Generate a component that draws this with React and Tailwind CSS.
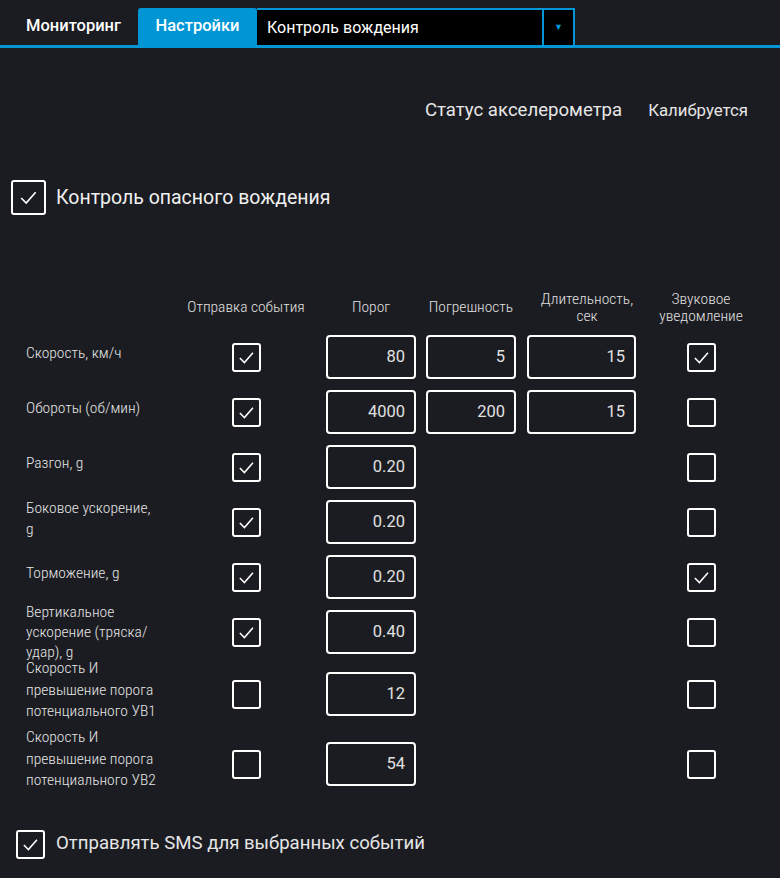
import React from 'react';

const ROWS = [
  { label: ['Скорость, км/ч'], send: true, porog: '80', err: '5', dur: '15', sound: true, h: 'h-[55px]', off: '-mt-[8px] leading-[21.5px]' },
  { label: ['Обороты (об/мин)'], send: true, porog: '4000', err: '200', dur: '15', sound: false, h: 'h-[55px]', off: '-mt-[8px] leading-[21.5px]' },
  { label: ['Разгон, g'], send: true, porog: '0.20', sound: false, h: 'h-[55px]', off: '-mt-[8px] leading-[21.5px]' },
  { label: ['Боковое ускорение,', 'g'], send: true, porog: '0.20', sound: false, h: 'h-[55px]', off: '-mt-[6px] leading-[21.5px]' },
  { label: ['Торможение, g'], send: true, porog: '0.20', sound: true, h: 'h-[55px]', off: '-mt-[8px] leading-[21.5px]' },
  { label: ['Вертикальное', 'ускорение (тряска/', 'удар), g'], send: true, porog: '0.40', sound: false, h: 'h-[55px]', off: '-mt-[1px] leading-[20px]' },
  { label: ['Скорость И', 'превышение порога', 'потенциального УВ1'], send: false, porog: '12', sound: false, h: 'h-[69px]', off: '-mt-[8px] leading-[21.5px]' },
  { label: ['Скорость И', 'превышение порога', 'потенциального УВ2'], send: false, porog: '54', sound: false, h: 'h-[71px]', off: '-mt-[10px] leading-[21.5px]' },
];

const narrow = { fontFamily: '"Roboto Condensed", "Liberation Sans Narrow", Roboto, sans-serif' };

function Check({ on, big }) {
  return (
    <div
      className={
        big
          ? 'w-[35px] h-[35px] border-2 border-white rounded-[3px] flex items-center justify-center'
          : 'w-[29px] h-[29px] border-2 border-white rounded-[3px] flex items-center justify-center'
      }
    >
      {on && (
        <svg width={big ? 21 : 19} height={big ? 21 : 19} viewBox="0 0 20 20" fill="none" stroke="white" strokeWidth="1.6">
          <path d="M3 10.5l4.8 4.8 9-10.3" />
        </svg>
      )}
    </div>
  );
}

function Field({ value, w }) {
  return (
    <div className={`${w} h-[44px] border-2 border-white rounded-[4px] flex items-center justify-end pr-[9px] text-[16.5px] text-[#e0e0e0]`}>
      {value}
    </div>
  );
}

export default function App() {
  return (
    <div className="w-[780px] h-[878px] bg-[#1b1c21] overflow-hidden" style={{ fontFamily: 'Roboto, "Liberation Sans", sans-serif' }}>
      {/* Tabs */}
      <div className="pt-[8px] border-b-[3px] border-[#0096d6] flex items-stretch h-[48px]">
        <div className="w-[138px] pl-[26px] flex items-center text-white text-[16.5px] font-medium">Мониторинг</div>
        <div className="w-[119px] bg-[#0096d6] rounded-t-[3px] flex items-center justify-center text-white text-[16.5px] font-medium">Настройки</div>
        <div className="w-[318px] bg-black border-t-2 border-r-2 border-[#0096d6] flex items-stretch">
          <div className="flex-1 flex items-center pl-[10px] text-white text-[16px]">Контроль вождения</div>
          <div className="w-[31px] border-l-2 border-[#0096d6] flex items-center justify-center text-[#0096d6] text-[9px]">▼</div>
        </div>
      </div>

      {/* Accelerometer status */}
      <div className="flex justify-end items-center mt-[49px] pr-[32px] text-[#e6e6e6]">
        <span className="text-[18.6px]">Статус акселерометра</span>
        <span className="ml-[26px] text-[16.8px]">Калибруется</span>
      </div>

      {/* Danger driving */}
      <div className="flex items-center ml-[11px] mt-[55px]">
        <Check on big />
        <span className="ml-[10px] text-[19.5px] text-[#f0f0f0]">Контроль опасного вождения</span>
      </div>

      {/* Table header */}
      <div className="flex items-center h-[34px] mt-[76px] text-[15.5px] text-[#e0e0e0] leading-[17px] text-center font-light" style={narrow}>
        <div className="w-[186px]" />
        <div className="w-[120px] whitespace-nowrap">Отправка события</div>
        <div className="ml-[20px] w-[90px]">Порог</div>
        <div className="ml-[10px] w-[90px]">Погрешность</div>
        <div className="ml-[11px] w-[120px] -mr-[11px]">Длительность,<br />сек</div>
        <div className="w-[130px]">Звуковое<br />уведомление</div>
      </div>

      {/* Rows */}
      <div className="mt-[5px]">
        {ROWS.map((r, i) => (
          <div key={i} className={`flex items-center ${r.h}`}>
            <div className={`w-[186px] pl-[26px] text-[15.5px] text-[#e6e6e6] font-light ${r.off}`} style={narrow}>
              {r.label.map((l, j) => (
                <div key={j} className="whitespace-nowrap">{l}</div>
              ))}
            </div>
            <div className="w-[120px] flex justify-center">
              <Check on={r.send} />
            </div>
            <div className="ml-[20px]">
              <Field value={r.porog} w="w-[90px]" />
            </div>
            <div className="ml-[10px] w-[90px]">
              {r.err && <Field value={r.err} w="w-[90px]" />}
            </div>
            <div className="ml-[11px] w-[109px]">
              {r.dur && <Field value={r.dur} w="w-[109px]" />}
            </div>
            <div className="w-[130px] flex justify-center">
              <Check on={r.sound} />
            </div>
          </div>
        ))}
      </div>

      {/* SMS */}
      <div className="flex items-center ml-[16px] mt-[30px]">
        <Check on />
        <span className="ml-[11px] text-[18.6px] text-[#e6e6e6]">Отправлять SMS для выбранных событий</span>
      </div>
    </div>
  );
}
